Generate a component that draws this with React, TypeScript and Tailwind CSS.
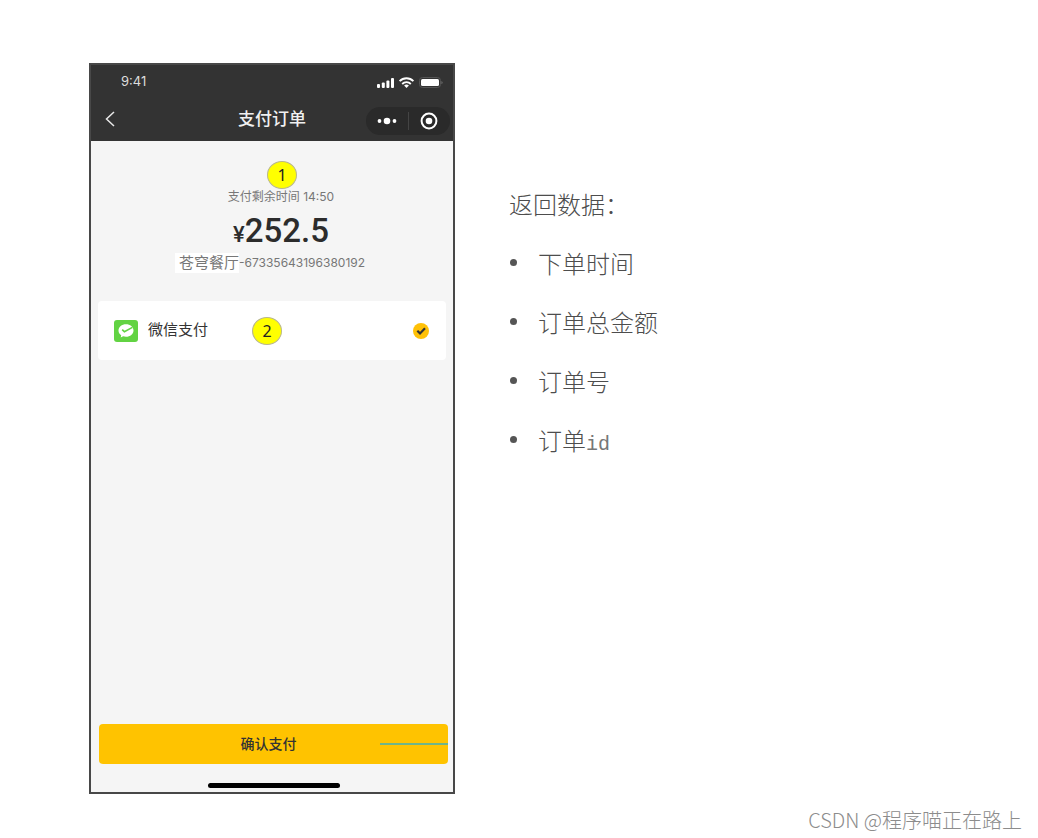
import React from "react";

const fields = [
  { name: "下单时间" },
  { name: "订单总金额" },
  { name: "订单号" },
  { name: "订单", suffix: "id" },
];

function Marker({ label }: { label: string }) {
  return (
    <span className="flex h-7 w-[30px] items-center justify-center rounded-[50%] border border-[#b9b78c] bg-[#ffff00] font-['Noto_Sans',sans-serif] text-base text-[#222222]">
      {label}
    </span>
  );
}

function StatusIcons() {
  return (
    <svg viewBox="0 0 66 14" className="h-3.5 w-[66px]" aria-hidden="true">
      <g fill="#ffffff">
        <rect x="0" y="9" width="3" height="4" rx="1" />
        <rect x="4.8" y="7.5" width="3" height="5.5" rx="1" />
        <rect x="9.4" y="5.5" width="3" height="7.5" rx="1" />
        <rect x="14" y="3" width="3" height="10" rx="1" />
      </g>
      <g fill="none" stroke="#ffffff" strokeWidth="1.8">
        <path d="M22.6 6.2a9.6 9.6 0 0 1 13.8 0" />
        <path d="M25.2 9a6 6 0 0 1 8.6 0" />
      </g>
      <path d="M27.1 10.6a3.4 3.4 0 0 1 4.8 0L29.5 13z" fill="#ffffff" />
      <rect x="42.5" y="2.5" width="21" height="10" rx="3" fill="none" stroke="#555555" />
      <rect x="44" y="4" width="18" height="7" rx="1.5" fill="#ffffff" />
      <path d="M64.5 6v3.2c1.4-.6 1.4-2.6 0-3.2z" fill="#777777" />
    </svg>
  );
}

function PhoneHeader() {
  return (
    <header className="flex h-[76px] flex-col bg-[#333333] text-[#f0f0f0]">
      <div className="flex h-[34px] items-center justify-between pr-2.5 pl-[30px]">
        <span className="text-[13px] text-[#dddddd]">9:41</span>
        <StatusIcons />
      </div>
      <div className="grid flex-1 grid-cols-[1fr_auto_1fr] items-center pb-[3px]">
        <button type="button" aria-label="返回" className="ml-[11px] flex h-6 w-4 items-center justify-center">
          <svg viewBox="0 0 10 16" className="h-4 w-2.5" fill="none" stroke="#e8e8e8" strokeWidth="1.5" aria-hidden="true">
            <path d="M9 1 1.5 8 9 15" />
          </svg>
        </button>
        <h1 className="text-[17px] leading-6 font-medium">支付订单</h1>
        <div className="mt-1 mr-[3px] flex h-7 w-[84px] items-center justify-self-end rounded-full bg-[#2a2a2a]">
          <button type="button" aria-label="更多" className="flex flex-1 justify-center">
            <svg viewBox="0 0 20 8" className="h-2 w-5" fill="#ffffff" aria-hidden="true">
              <circle cx="2.5" cy="4" r="1.9" />
              <circle cx="10" cy="4" r="3.3" />
              <circle cx="17.5" cy="4" r="1.9" />
            </svg>
          </button>
          <span className="h-[18px] w-px bg-[#444444]" />
          <button type="button" aria-label="关闭" className="flex flex-1 justify-center">
            <svg viewBox="0 0 18 18" className="size-[18px]" aria-hidden="true">
              <circle cx="9" cy="9" r="7.4" fill="none" stroke="#ffffff" strokeWidth="2" />
              <circle cx="9" cy="9" r="3.3" fill="#ffffff" />
            </svg>
          </button>
        </div>
      </div>
    </header>
  );
}

function Phone() {
  return (
    <section className="flex aspect-[366/731] w-[366px] shrink-0 flex-col border-2 border-[#484848] bg-[#f5f5f5] font-['Inter','Noto_Sans_CJK_SC',sans-serif]">
      <PhoneHeader />
      <div className="flex flex-col items-center pt-5 pr-1">
        <div className="ml-6">
          <Marker label="1" />
        </div>
        <p className="ml-[22px] text-xs leading-4 text-[#777777]">支付剩余时间 14:50</p>
        <p className="mt-2 ml-[22px] flex h-9 items-baseline font-['Roboto','Noto_Sans_CJK_SC',sans-serif] leading-9 font-medium text-[#2c2c2c]">
          <span className="text-[22px]">¥</span>
          <span className="text-[33px]">252.5</span>
        </p>
        <p className="mt-1 flex items-center text-xs leading-5 text-[#777777]">
          <span className="bg-white pl-1 text-[15px] leading-5">苍穹餐厅</span>
          <span>-67335643196380192</span>
        </p>
      </div>
      <label className="mx-[7px] mt-7 flex h-[59px] items-center rounded bg-white pr-[17px] pl-4">
        <svg viewBox="0 0 24 22" className="h-[22px] w-6" aria-hidden="true">
          <rect width="24" height="22" rx="3" fill="#62d343" />
          <path d="M12 4.2c-4.2 0-7.5 2.7-7.5 6.2 0 2 1 3.6 2.7 4.8l-.5 2.2 2.4-1.2c.9.3 1.9.5 2.9.5 4.2 0 7.5-2.8 7.5-6.3S16.2 4.2 12 4.2z" fill="#ffffff" />
          <path d="M8.2 9.7l2.2 2 8-4.3" fill="none" stroke="#62d343" strokeWidth="1.6" />
        </svg>
        <span className="ml-2.5 text-[15px] text-[#333333]">微信支付</span>
        <span className="ml-11">
          <Marker label="2" />
        </span>
        <span className="ml-auto grid size-4 place-items-center">
          <input type="radio" name="payment" defaultChecked className="col-start-1 row-start-1 size-4 appearance-none rounded-full bg-[#ffc107]" />
          <svg viewBox="0 0 16 16" className="pointer-events-none col-start-1 row-start-1 size-4" fill="none" stroke="#333333" strokeWidth="2.2" aria-hidden="true">
            <path d="M4.3 7.8 7 10.4 12 5.3" />
          </svg>
        </span>
      </label>
      <div className="mt-auto mr-[5px] ml-2">
        <button type="button" className="grid h-10 w-full grid-cols-[1fr_auto_1fr] items-center rounded bg-[#ffc300] text-sm font-medium text-[#333333]">
          <span className="col-start-2 mr-2.5">确认支付</span>
          <span className="h-0.5 w-[68px] justify-self-end bg-[#6fb58a]" />
        </button>
        <div className="mx-auto mt-[19px] mb-1 h-[5px] w-[132px] rounded-full bg-black" />
      </div>
    </section>
  );
}

export default function App() {
  return (
    <div className="flex min-h-screen flex-col bg-white">
      <main className="flex items-start gap-[54px] pt-[63px] pl-[89px]">
        <Phone />
        <section className="pt-[111px] font-['Noto_Sans_CJK_SC',sans-serif] text-2xl leading-[59px] font-light text-[#4d4d4d]">
          <h2>返回数据：</h2>
          <ul>
            {fields.map((field) => (
              <li key={field.name} className="flex items-center">
                <span className="mr-[21px] ml-px size-[7px] rounded-full bg-[#555555]" />
                <span>
                  {field.name}
                  {field.suffix && <span className="font-['Liberation_Mono',monospace] text-xl text-[#777777]">{field.suffix}</span>}
                </span>
              </li>
            ))}
          </ul>
        </section>
      </main>
      <footer className="mt-auto pr-4 pb-0.5 text-right font-['Noto_Sans_CJK_SC',sans-serif] text-xl leading-8 font-light text-[#8c8c8c]">
        CSDN @程序喵正在路上
      </footer>
    </div>
  );
}
